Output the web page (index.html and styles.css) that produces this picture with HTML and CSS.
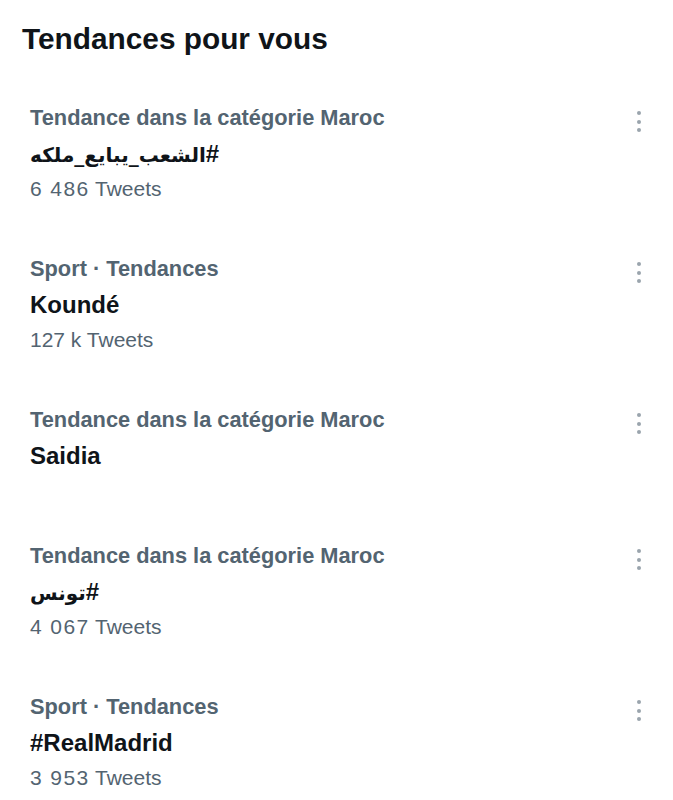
FILE: index.html
```html
<!DOCTYPE html>
<html lang="fr">
<head>
<meta charset="utf-8">
<title>Tendances pour vous</title>
<link rel="stylesheet" href="styles.css">
</head>
<body>
<main class="panel">
  <h1 class="heading">Tendances pour vous</h1>
  <ul class="trends">
    <li class="trend">
      <div class="trend-body">
        <div class="trend-meta">Tendance dans la catégorie Maroc</div>
        <div class="trend-title" dir="auto">#<span class="ar">الشعب_يبايع_ملكه</span></div>
        <div class="trend-count"><span class="num">6 486</span> Tweets</div>
      </div>
      <div class="more" aria-label="Plus"><span></span><span></span><span></span></div>
    </li>
    <li class="trend">
      <div class="trend-body">
        <div class="trend-meta">Sport · Tendances</div>
        <div class="trend-title">Koundé</div>
        <div class="trend-count">127 k Tweets</div>
      </div>
      <div class="more" aria-label="Plus"><span></span><span></span><span></span></div>
    </li>
    <li class="trend trend-short">
      <div class="trend-body">
        <div class="trend-meta">Tendance dans la catégorie Maroc</div>
        <div class="trend-title">Saidia</div>
      </div>
      <div class="more" aria-label="Plus"><span></span><span></span><span></span></div>
    </li>
    <li class="trend">
      <div class="trend-body">
        <div class="trend-meta">Tendance dans la catégorie Maroc</div>
        <div class="trend-title" dir="auto">#<span class="ar">تونس</span></div>
        <div class="trend-count"><span class="num">4 067</span> Tweets</div>
      </div>
      <div class="more" aria-label="Plus"><span></span><span></span><span></span></div>
    </li>
    <li class="trend">
      <div class="trend-body">
        <div class="trend-meta">Sport · Tendances</div>
        <div class="trend-title">#RealMadrid</div>
        <div class="trend-count"><span class="num">3 953</span> Tweets</div>
      </div>
      <div class="more" aria-label="Plus"><span></span><span></span><span></span></div>
    </li>
  </ul>
</main>
</body>
</html>
```
FILE: styles.css
```css
html, body {
  margin: 0;
  padding: 0;
  background: #ffffff;
}

body {
  font-family: "Liberation Sans", "DejaVu Sans", Arial, sans-serif;
  color: #0f1419;
}

.panel {
  padding-top: 21px;
}

.heading {
  margin: 0;
  padding-left: 22px;
  font-size: 29.8px;
  line-height: 36px;
  font-weight: 700;
  color: #0f1419;
}

.trends {
  list-style: none;
  margin: 21px 0 0;
  padding: 0;
}

.trend {
  display: flex;
  align-items: flex-start;
  justify-content: space-between;
  padding: 22px 30px 22px 30px;
}

.trend-short {
  padding-bottom: 43px;
}

.trend-body {
  display: flex;
  flex-direction: column;
}

.trend-meta {
  font-size: 21.8px;
  line-height: 36px;
  font-weight: 700;
  color: #536471;
}

.trend-title {
  height: 35px;
  font-size: 24px;
  line-height: 35px;
  font-weight: 700;
  color: #0f1419;
  text-align: left;
}

.trend-title .ar {
  font-family: "DejaVu Sans", sans-serif;
  font-size: 20px;
  line-height: 20px;
  font-weight: 700;
}

.trend-count {
  font-size: 21px;
  line-height: 36px;
  font-weight: 400;
  color: #536471;
}

.num {
  letter-spacing: 1.4px;
}

.more {
  display: flex;
  flex-direction: column;
  align-items: center;
  gap: 4.5px;
  padding-top: 11px;
  width: 8px;
}

.more span {
  display: block;
  width: 4px;
  height: 4px;
  border-radius: 50%;
  background: #9aa4ad;
}
```
